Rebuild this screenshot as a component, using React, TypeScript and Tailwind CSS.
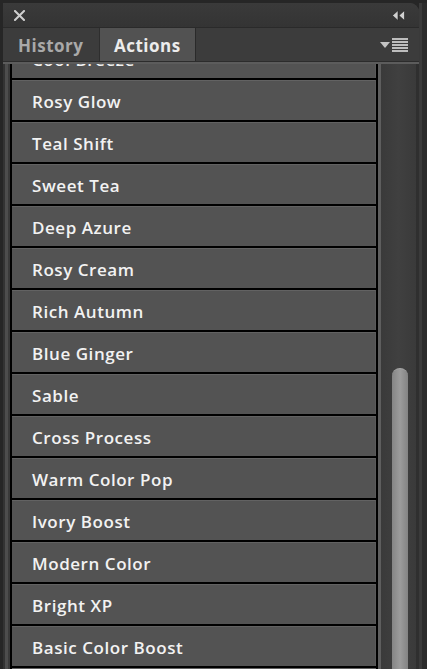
import React from 'react';

const actions = [
  'Cool Breeze',
  'Rosy Glow',
  'Teal Shift',
  'Sweet Tea',
  'Deep Azure',
  'Rosy Cream',
  'Rich Autumn',
  'Blue Ginger',
  'Sable',
  'Cross Process',
  'Warm Color Pop',
  'Ivory Boost',
  'Modern Color',
  'Bright XP',
  'Basic Color Boost',
  'Soft Light',
];

const font = { fontFamily: '"Open Sans", "Liberation Sans", sans-serif' };

function CloseIcon() {
  return (
    <svg width="11" height="11" viewBox="0 0 11 11">
      <path d="M1 1L10 10M10 1L1 10" stroke="#cfcfcf" strokeWidth="2" strokeLinecap="square" />
    </svg>
  );
}

function CollapseIcon() {
  return (
    <svg width="13" height="11" viewBox="0 0 13 11">
      <path d="M6 0.5L0.5 5.5L6 10.5Z" fill="#d0d0d0" stroke="#1c1c1c" strokeWidth="0.6" />
      <path d="M12.5 0.5L7 5.5L12.5 10.5Z" fill="#d0d0d0" stroke="#1c1c1c" strokeWidth="0.6" />
    </svg>
  );
}

function PanelMenuIcon() {
  return (
    <div className="flex items-center gap-[2px]">
      <svg width="10" height="6" viewBox="0 0 10 6">
        <path d="M0 0H10L5 6Z" fill="#c4c4c4" />
      </svg>
      <div className="flex flex-col gap-[1px] w-[16px]">
        <div className="h-[2px] bg-[#bdbdbd]" />
        <div className="h-[2px] bg-[#bdbdbd]" />
        <div className="h-[2px] bg-[#bdbdbd]" />
        <div className="h-[2px] bg-[#bdbdbd]" />
        <div className="h-[2px] bg-[#bdbdbd]" />
      </div>
    </div>
  );
}

function ActionRow({ name }: { name: string }) {
  return (
    <div className="h-[40px] shrink-0 flex items-center pl-[20px] pt-[2px] bg-[#535353] border-t border-[#626262] border-r border-r-[#5a5a5a] text-[17px] tracking-[0.55px] font-semibold text-[#f2f2f2] whitespace-nowrap">
      {name}
    </div>
  );
}

export default function App() {
  return (
    <div className="w-[427px] h-[669px] bg-[#262626] flex overflow-hidden select-none" style={font}>
      <div className="w-[416px] ml-[3px] mt-[3px] flex flex-col rounded-tr-[9px] bg-[#383838] overflow-hidden">
        {/* title bar */}
        <div className="h-[25px] shrink-0 flex items-center justify-between pl-[11px] pr-[14px] bg-gradient-to-b from-[#3a3a3a] to-[#343434] border-b border-[#2a2a2a]">
          <CloseIcon />
          <CollapseIcon />
        </div>

        {/* tabs */}
        <div className="h-[34px] shrink-0 flex bg-[#3c3c3c] border-b border-[#2c2c2c]">
          <div className="w-[97px] flex items-center pl-[15px] pt-[2px] text-[17px] tracking-[0.5px] font-bold text-[#a9a9a9] border-r border-[#2e2e2e]">
            History
          </div>
          <div className="w-[96px] flex items-center pl-[14px] pt-[2px] bg-[#525252] text-[17px] tracking-[0.5px] font-bold text-[#ececec] border-r border-[#2a2a2a]">
            Actions
          </div>
          <div className="flex-1 flex items-center justify-end pr-[11px]">
            <PanelMenuIcon />
          </div>
        </div>
        <div className="h-[2px] shrink-0 bg-[#5c5c5c]" />

        {/* list + scrollbar */}
        <div className="flex-1 flex min-h-0">
          <div className="w-[7px] shrink-0 flex">
            <div className="w-[2px] bg-[#333333]" />
            <div className="w-[3px] bg-[#4d4d4d]" />
            <div className="w-[2px] bg-[#3a3a3a]" />
          </div>
          <div className="w-[368px] shrink-0 bg-black px-[2px] overflow-hidden">
            <div className="flex flex-col gap-[2px] mt-[-26px]">
              {actions.map((a) => (
                <ActionRow key={a} name={a} />
              ))}
            </div>
          </div>
          <div className="flex-1 flex">
            <div className="w-[3px] bg-[#5e5e5e]" />
            <div className="flex-1 flex justify-start pl-[11px] bg-gradient-to-r from-[#3a3a3a] via-[#404040] to-[#3a3a3a]">
              <div className="w-[16px] mt-[304px] rounded-t-full border-t border-[#a8a8a8] bg-gradient-to-r from-[#858585] via-[#9c9c9c] to-[#838383]" />
            </div>
            <div className="w-[3px] bg-[#2f2f2f]" />
          </div>
        </div>
      </div>
      <div className="w-[8px] mt-[3px] flex">
        <div className="w-[3px] bg-[#3a3a3a]" />
        <div className="w-[5px] bg-[#2b2b2b]" />
      </div>
    </div>
  );
}
